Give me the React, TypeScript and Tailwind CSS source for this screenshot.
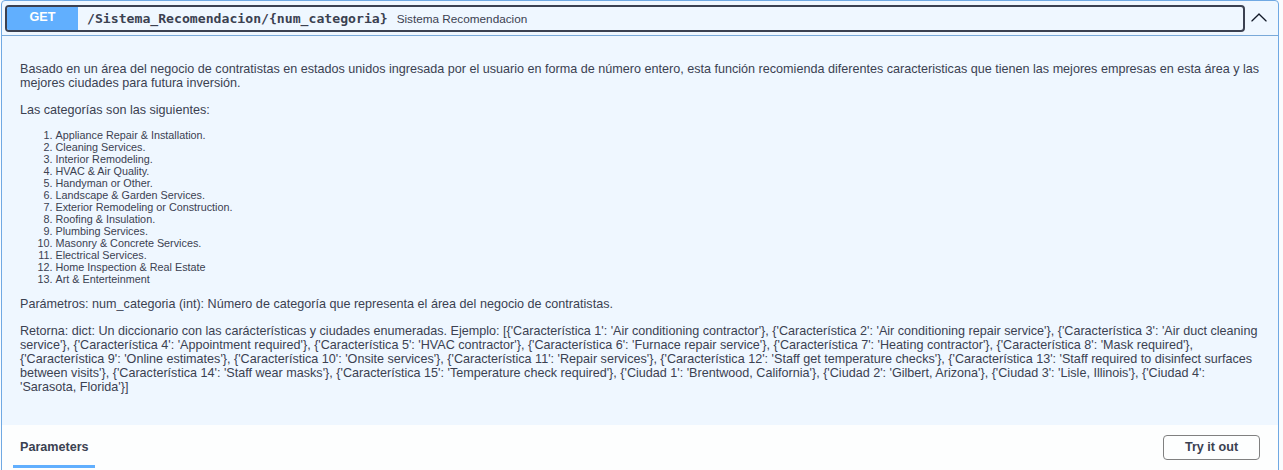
const categories = [
  'Appliance Repair & Installation.',
  'Cleaning Services.',
  'Interior Remodeling.',
  'HVAC & Air Quality.',
  'Handyman or Other.',
  'Landscape & Garden Services.',
  'Exterior Remodeling or Construction.',
  'Roofing & Insulation.',
  'Plumbing Services.',
  'Masonry & Concrete Services.',
  'Electrical Services.',
  'Home Inspection & Real Estate',
  'Art & Enterteinment',
];

const intro = [
  'Basado en un área del negocio de contratistas en estados unidos ingresada por el usuario en forma de número entero, esta función recomienda diferentes caracteristicas que tienen las mejores empresas en esta área y las',
  'mejores ciudades para futura inversión.',
];

const returns = [
  "Retorna: dict: Un diccionario con las carácterísticas y ciudades enumeradas. Ejemplo: [{'Característica 1': 'Air conditioning contractor'}, {'Característica 2': 'Air conditioning repair service'}, {'Característica 3': 'Air duct cleaning",
  "service'}, {'Característica 4': 'Appointment required'}, {'Característica 5': 'HVAC contractor'}, {'Característica 6': 'Furnace repair service'}, {'Característica 7': 'Heating contractor'}, {'Característica 8': 'Mask required'},",
  "{'Característica 9': 'Online estimates'}, {'Característica 10': 'Onsite services'}, {'Característica 11': 'Repair services'}, {'Característica 12': 'Staff get temperature checks'}, {'Característica 13': 'Staff required to disinfect surfaces",
  "between visits'}, {'Característica 14': 'Staff wear masks'}, {'Característica 15': 'Temperature check required'}, {'Ciudad 1': 'Brentwood, California'}, {'Ciudad 2': 'Gilbert, Arizona'}, {'Ciudad 3': 'Lisle, Illinois'}, {'Ciudad 4':",
  "'Sarasota, Florida'}]",
];

function Lines({ lines }: { lines: string[] }) {
  return (
    <p className="whitespace-nowrap">
      {lines.map((line) => (
        <span key={line} className="block">{line}</span>
      ))}
    </p>
  );
}

function OperationHeader() {
  return (
    <div className="flex h-[34px] items-start border-b border-[#79a9d9] pt-[3px] pl-[3px]">
      <button className="flex h-[27px] w-[1240px] shrink-0 items-center rounded-[4px] border-2 border-[#3b4151]">
        <span className="flex h-full w-[71px] items-center justify-center rounded-l-[2px] bg-[#61affe] pb-0.5 text-[12.6px] font-bold text-white">
          GET
        </span>
        <span className="ml-[9px] font-['DejaVu_Sans_Mono',monospace] text-[13.15px] font-bold">
          /Sistema_Recomendacion/&#123;num_categoria&#125;
        </span>
        <span className="ml-[9px] text-[11.75px]">Sistema Recomendacion</span>
      </button>
      <svg className="mt-[3px] ml-[5px] h-[18px] w-[18px]" viewBox="0 0 20 20" fill="#111827">
        <path d="M17.418 14.908c.272.281.701.281.979 0s.271-.736 0-1.017l-7.908-7.83c-.27-.281-.701-.281-.979 0l-7.908 7.83c-.272.281-.272.736 0 1.017s.709.281.979 0L10 7.767z" />
      </svg>
    </div>
  );
}

export default function App() {
  return (
    <div className="h-[470px] overflow-hidden bg-[#fafcfe] pl-px font-['Liberation_Sans',Arial,sans-serif] text-[#3b4151]">
      <div className="h-[480px] w-[1278px] rounded-[4px] border border-[#70a9e3] bg-[#eff7ff] pt-px">
        <OperationHeader />
        <div className="flex h-[389px] flex-col px-[18px] pt-[26px] text-[12.6px] leading-[14px]">
          <Lines lines={intro} />
          <p className="mt-[13px]">Las categorías son las siguientes:</p>
          <ol className="mt-[12px] list-decimal pl-[35.5px] text-[10.8px] leading-[12px]">
            {categories.map((category) => (
              <li key={category}>{category}</li>
            ))}
          </ol>
          <p className="mt-[12px]">
            Parámetros: num_categoria (int): Número de categoría que representa el área del negocio de contratistas.
          </p>
          <div className="mt-[13px]">
            <Lines lines={returns} />
          </div>
        </div>
        <div className="flex h-[55px] items-start justify-between bg-[#fdfefe] pr-[18px] pl-[11px]">
          <h4 className="flex h-[43px] w-[82px] items-center border-b-[3px] border-[#61affe] pl-[7px] text-[12.6px] font-bold whitespace-nowrap">
            <span className="pt-[5px]">Parameters</span>
          </h4>
          <button className="mt-[10px] h-[25px] w-[97px] rounded-[4px] border border-[#808080] text-[12.6px] font-bold">
            Try it out
          </button>
        </div>
      </div>
    </div>
  );
}
